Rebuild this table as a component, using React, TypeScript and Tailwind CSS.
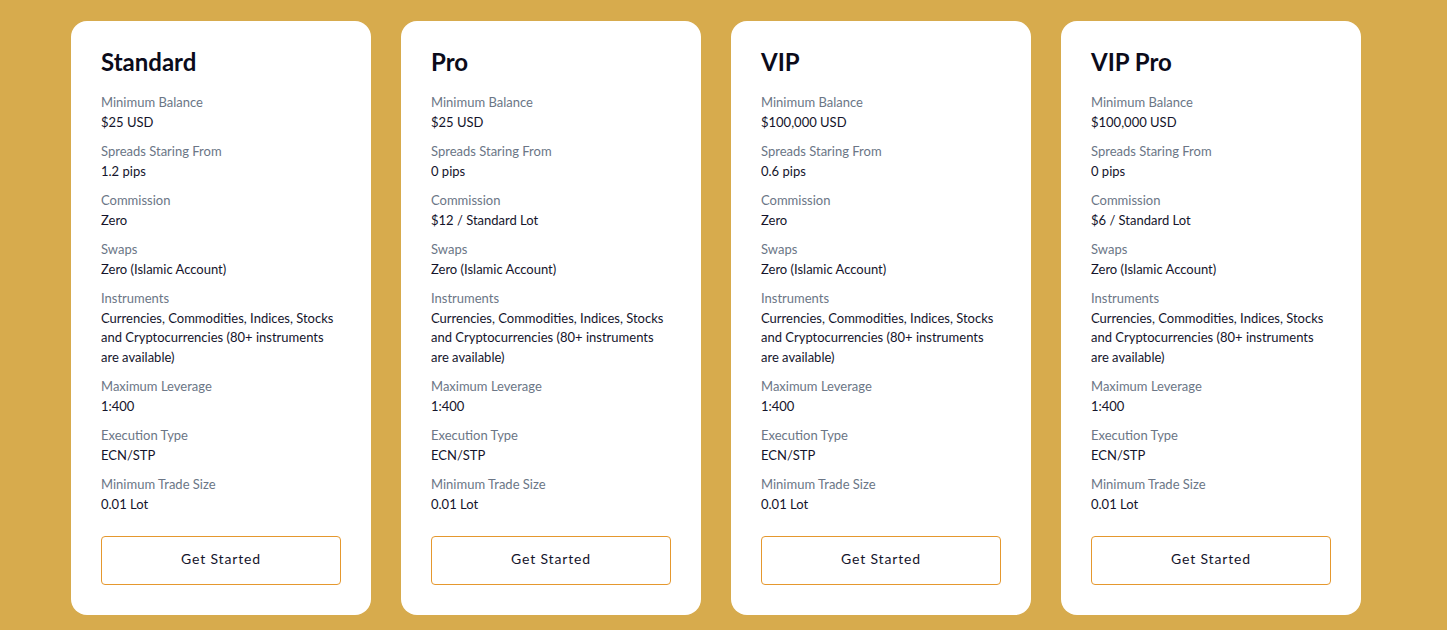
import React from 'react';

interface Row {
  label: string;
  value: string;
}

interface Plan {
  name: string;
  rows: Row[];
}

const instruments = 'Currencies, Commodities, Indices, Stocks and Cryptocurrencies (80+ instruments are available)';

const makeRows = (balance: string, spread: string, commission: string): Row[] => [
  { label: 'Minimum Balance', value: balance },
  { label: 'Spreads Staring From', value: spread },
  { label: 'Commission', value: commission },
  { label: 'Swaps', value: 'Zero (Islamic Account)' },
  { label: 'Instruments', value: instruments },
  { label: 'Maximum Leverage', value: '1:400' },
  { label: 'Execution Type', value: 'ECN/STP' },
  { label: 'Minimum Trade Size', value: '0.01 Lot' },
];

const plans: Plan[] = [
  { name: 'Standard', rows: makeRows('$25 USD', '1.2 pips', 'Zero') },
  { name: 'Pro', rows: makeRows('$25 USD', '0 pips', '$12 / Standard Lot') },
  { name: 'VIP', rows: makeRows('$100,000 USD', '0.6 pips', 'Zero') },
  { name: 'VIP Pro', rows: makeRows('$100,000 USD', '0 pips', '$6 / Standard Lot') },
];

const PlanCard: React.FC<{ plan: Plan }> = ({ plan }) => {
  return (
    <div className="w-[300px] shrink-0 bg-white rounded-[16px] px-[30px] pt-[26px] pb-[30px] flex flex-col">
      <h2 className="text-[24px] leading-[30px] font-bold text-[#0b0b1a] mb-[16px]">{plan.name}</h2>
      <div className="flex flex-col gap-[10px]">
        {plan.rows.map((row) => (
          <div key={row.label} className="text-[13px] leading-[19.5px]">
            <div className="text-[#6b7686]">{row.label}</div>
            <div className="text-[#14142b]">{row.value}</div>
          </div>
        ))}
      </div>
      <button className="mt-[22px] w-[240px] h-[49px] pb-[4px] border border-[#e5982e] rounded-[4px] text-[14px] tracking-[0.06em] text-[#14142b] bg-white">
        Get Started
      </button>
    </div>
  );
};

export default function App() {
  return (
    <div
      className="w-[1447px] h-[630px] bg-[#d7ab4d] pl-[71px] pt-[21px] flex gap-[30px] items-start overflow-hidden"
      style={{ fontFamily: 'Lato, "Open Sans", sans-serif' }}
    >
      {plans.map((plan) => (
        <PlanCard key={plan.name} plan={plan} />
      ))}
    </div>
  );
}
